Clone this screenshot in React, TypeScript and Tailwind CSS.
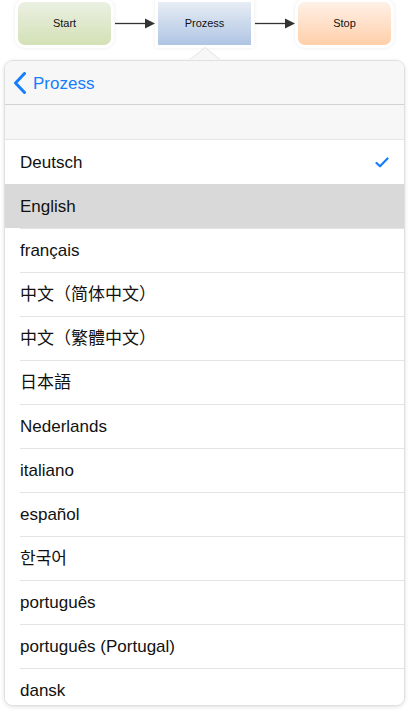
import React from "react";

const langs = [
  "Deutsch",
  "English",
  "français",
  "中文（简体中文）",
  "中文（繁體中文）",
  "日本語",
  "Nederlands",
  "italiano",
  "español",
  "한국어",
  "português",
  "português (Portugal)",
  "dansk",
];

function Arrow() {
  return (
    <svg width="47" height="43" viewBox="0 0 47 43" className="block">
      <line x1="4" y1="21.5" x2="36" y2="21.5" stroke="#333" strokeWidth="1.3" />
      <polygon points="34,16.5 44,21.5 34,26.5" fill="#333" />
    </svg>
  );
}

export default function App() {
  const font = { fontFamily: '"Liberation Sans", "Noto Sans CJK SC", Arial, sans-serif' };
  return (
    <div className="w-[409px] h-[711px] bg-white overflow-hidden" style={font}>
      <div className="flex items-start pl-[18px] pt-[2px]">
        <div className="w-[93px] h-[43px] rounded-[7px] bg-gradient-to-b from-[#ebf0e2] to-[#d3e1b6] flex items-center justify-center text-[11px] text-[#111] shadow-[0_0_0_3px_#fff,0_0_4px_3px_rgba(0,0,0,0.08)]">
          Start
        </div>
        <Arrow />
        <div className="w-[93px] h-[43px] bg-gradient-to-b from-[#e8edf4] to-[#afc5e4] flex items-center justify-center text-[11px] text-[#111] shadow-[0_0_0_3px_#fff,0_0_4px_3px_rgba(0,0,0,0.08)]">
          Prozess
        </div>
        <Arrow />
        <div className="w-[93px] h-[43px] rounded-[7px] bg-gradient-to-b from-[#fff1e7] to-[#ffcfaa] flex items-center justify-center text-[11px] text-[#111] shadow-[0_0_0_3px_#fff,0_0_4px_3px_rgba(0,0,0,0.08)]">
          Stop
        </div>
      </div>
      <div className="flex justify-center pl-[1px] mt-[2px] h-[13px] relative z-10">
        <svg width="32" height="13" viewBox="0 0 32 13" className="block">
          <polygon points="0,13.5 16,0.5 32,13.5" fill="#f7f7f7" stroke="#e2e2e2" strokeWidth="1" />
          <rect x="1" y="12" width="30" height="2" fill="#f7f7f7" />
        </svg>
      </div>
      <div className="mx-[4px] h-[646px] rounded-[9px] border border-[#e0e0e0] bg-white overflow-hidden shadow-[0_1px_4px_rgba(0,0,0,0.12)]">
        <div className="h-[44px] bg-[#f7f7f7] flex items-center pl-[8px] border-b border-[#d2d2d2]">
          <svg width="14" height="22" viewBox="0 0 14 22" className="block mt-[1px]">
            <polyline points="11.5,1.5 2.5,11 11.5,20.5" fill="none" stroke="#157efb" strokeWidth="3" strokeLinecap="round" strokeLinejoin="round" />
          </svg>
          <span className="ml-[6px] text-[17px] text-[#157efb] pt-[2px]">Prozess</span>
        </div>
        <div className="h-[35px] bg-[#f7f7f7] border-b border-[#e6e6e6]" />
        {langs.map((l, i) => (
          <div
            key={l}
            className={`h-[44px] flex items-center relative ${i === 1 ? "bg-[#d9d9d9]" : "bg-white"}`}
          >
            <span className="pl-[15px] pt-[2px] text-[17px] text-[#111]">{l}</span>
            {i === 0 && (
              <svg width="14" height="11" viewBox="0 0 14 11" className="absolute right-[15px] top-[17px]">
                <polyline points="1.5,6 5,9.3 12.5,1.5" fill="none" stroke="#157efb" strokeWidth="2.2" strokeLinecap="round" strokeLinejoin="round" />
              </svg>
            )}
            {i > 1 && <div className="absolute left-[15px] right-0 top-0 h-px bg-[#e4e4e4]" />}
          </div>
        ))}
      </div>
    </div>
  );
}
